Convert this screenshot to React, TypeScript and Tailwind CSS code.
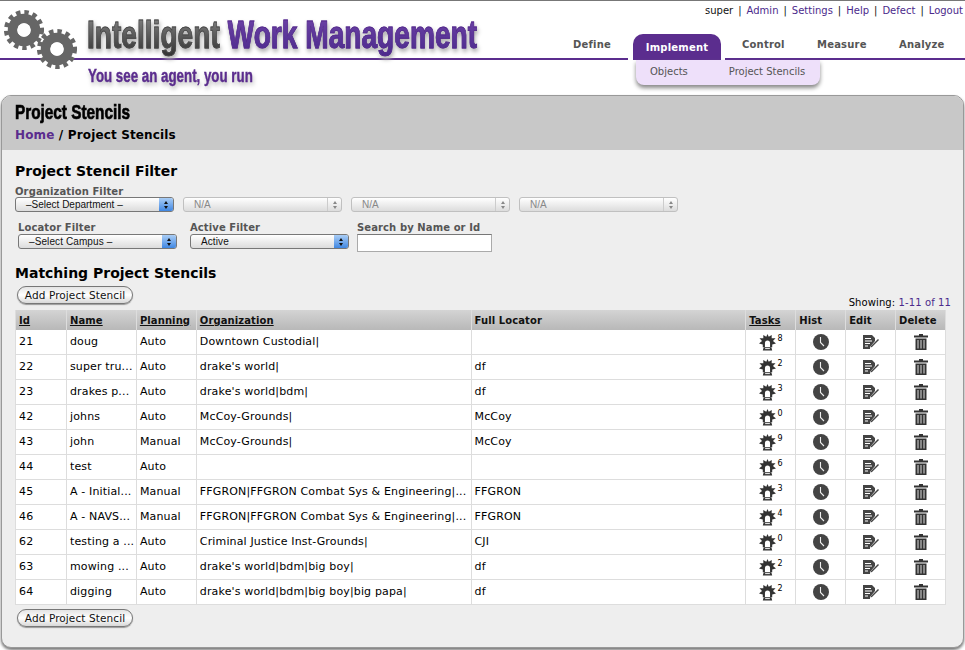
import React from "react";

const rows = [
    ["21", "doug", "Auto", "Downtown Custodial|", "", "8"],
    ["22", "super tru...", "Auto", "drake's world|", "df", "2"],
    ["23", "drakes p...", "Auto", "drake's world|bdm|", "df", "3"],
    ["42", "johns", "Auto", "McCoy-Grounds|", "McCoy", "0"],
    ["43", "john", "Manual", "McCoy-Grounds|", "McCoy", "9"],
    ["44", "test", "Auto", "", "", "6"],
    ["45", "A - Initial...", "Manual", "FFGRON|FFGRON Combat Sys & Engineering|...", "FFGRON", "3"],
    ["46", "A - NAVS...", "Manual", "FFGRON|FFGRON Combat Sys & Engineering|...", "FFGRON", "4"],
    ["62", "testing a ...", "Auto", "Criminal Justice Inst-Grounds|", "CJI", "0"],
    ["63", "mowing ...", "Auto", "drake's world|bdm|big boy|", "df", "2"],
    ["64", "digging", "Auto", "drake's world|bdm|big boy|big papa|", "df", "2"],
];

const Gear = ({ className }: { className: string }) => (
    <svg viewBox="0 0 44 44" className={className}>
        <circle cx="22" cy="22" r="18.5" fill="none" stroke="#666" strokeWidth="5" strokeDasharray="4.6 4.1" />
        <circle cx="22" cy="22" r="12" fill="none" stroke="#666" strokeWidth="10" />
        <circle cx="22" cy="22" r="7" fill="#fff" />
    </svg>
);

const Beacon = () => (
    <svg viewBox="0 0 18 18" className="w-[17px] h-[17px]">
        <polygon
            points="9,0 10.3,3 13.5,1 13.4,4.4 17.5,4.5 14.8,7.5 18,10 14,11 14,14 4,14 4,11 0,10 3.2,7.5 0.5,4.5 4.6,4.4 4.5,1 7.7,3"
            fill="#333"
        />
        <path d="M6.3 14 V9.5 a2.7 2.7 0 0 1 5.4 0 V14 Z" fill="#fff" />
        <path d="M5 14 H13 L14 17.5 H4 Z" fill="#333" />
        <rect x="6.5" y="15" width="5" height="1" fill="#fff" />
    </svg>
);

const Clock = () => (
    <svg viewBox="0 0 16 16" className="w-[16px] h-[16px]">
        <circle cx="8" cy="8" r="8" fill="#444" />
        <path d="M7.5 3 V8.5 L11 12" fill="none" stroke="#eee" strokeWidth="1.1" />
    </svg>
);

const EditNote = () => (
    <svg viewBox="0 0 16 14" className="w-[16px] h-[14px]">
        <path d="M0 0 H9 L12 3 V6 L7 12 V14 H0 Z" fill="#444" />
        <path d="M2 3.5 H8 M2 6 H9 M2 8.5 H7 M2 11 H5" stroke="#fff" strokeWidth="1" />
        <path d="M8 11 L15 4 L16 5 L9 12 L7.5 12.5 Z" fill="#444" />
    </svg>
);

const Trash = () => (
    <svg viewBox="0 0 14 16" className="w-[14px] h-[16px]">
        <path d="M5 0 H9 V1.5 H14 V3.5 H0 V1.5 H5 Z" fill="#333" />
        <path d="M1.5 4.5 H12.5 V16 H1.5 Z" fill="#333" />
        <path d="M4 6 V14.5 M7 6 V14.5 M10 6 V14.5" stroke="#ddd" strokeWidth="1" />
    </svg>
);

const FakeSelect = ({ label, disabled, className }: { label: string; disabled?: boolean; className: string }) => (
    <div
        className={`h-[15px] flex items-center justify-between rounded-[3px] border pl-[10px] font-['Liberation_Sans',sans-serif] text-[10px] leading-none bg-gradient-to-b from-white to-[#dcdcdc] ${
            disabled ? "border-[#c0c0c0] text-[#888]" : "border-[#777] text-[#111]"
        } ${className}`}
    >
        <span>{label}</span>
        {disabled ? (
            <span className="w-[14px] h-full border-l border-[#ccc] flex flex-col items-center justify-center gap-[2px]">
                <span className="w-0 h-0 border-x-[2px] border-x-transparent border-b-[3px] border-b-[#888]" />
                <span className="w-0 h-0 border-x-[2px] border-x-transparent border-t-[3px] border-t-[#888]" />
            </span>
        ) : (
            <span className="w-[14px] h-full rounded-r-[2px] bg-gradient-to-b from-[#a9cdf5] to-[#3f87e2] flex flex-col items-center justify-center gap-[2px]">
                <span className="w-0 h-0 border-x-[2px] border-x-transparent border-b-[3px] border-b-[#111]" />
                <span className="w-0 h-0 border-x-[2px] border-x-transparent border-t-[3px] border-t-[#111]" />
            </span>
        )}
    </div>
);

const AddButton = () => (
    <button className="ml-[2px] w-[116px] h-[18px] rounded-[9px] border border-[#777] bg-gradient-to-b from-[#e4e4e4] via-white to-[#d8d8d8] text-[10.5px] tracking-[0.1px] leading-none text-[#111] shadow-[0_1px_1px_#999]">
        Add Project Stencil
    </button>
);

const Th = ({ children, className, link }: { children: string; className: string; link?: boolean }) => (
    <div className={`h-full flex items-center pl-[3px] border-r border-[#ddd] ${link ? "underline" : ""} ${className}`}>
        {children}
    </div>
);

const Td = ({ children, className }: { children?: React.ReactNode; className: string }) => (
    <div className={`h-full flex items-center pl-[3px] pt-px border-r border-[#ddd] whitespace-nowrap overflow-hidden ${className}`}>
        {children}
    </div>
);

const IconTd = ({ children }: { children: React.ReactNode }) => (
    <div className="w-[50px] h-full flex items-center justify-center border-r border-[#ddd]">{children}</div>
);

export default function App() {
    return (
        <div className="w-[965px] h-[650px] overflow-hidden bg-white border-t border-[#777] font-['DejaVu_Sans',sans-serif] text-[11px] text-black">
            <header className="relative h-[94px] flex">
                <Gear className="absolute z-10 left-[3px] top-[8px] w-[42px] h-[42px]" />
                <Gear className="absolute z-10 left-[36px] top-[27px] w-[42px] h-[42px]" />
                <div className="w-[628px]">
                    <div className="h-[59px] border-b-2 border-[#5b2d8e] pl-[87px] flex justify-between">
                        <div className="w-[400px] pt-[14px] whitespace-nowrap drop-shadow-[1px_3px_2px_#aaa]">
                            <div className="inline-block origin-left scale-x-[0.74] text-[38px] leading-[40px] font-bold font-['Liberation_Sans',sans-serif] [-webkit-text-stroke:0.8px_#4a4a4a]">
                                <span className="bg-gradient-to-b from-[#888] to-[#333] bg-clip-text text-transparent">Intelligent </span>
                                <span className="bg-gradient-to-b from-[#6f43a8] to-[#4b2a8c] bg-clip-text text-transparent [-webkit-text-stroke:0.8px_#552b8c]">Work Management</span>
                            </div>
                        </div>
                        <div className="pt-[37px] pr-[17px] text-[10px] tracking-[0.2px] leading-[14px] font-bold text-[#555]">Define</div>
                    </div>
                    <div className="pl-[88px] pt-[5px] whitespace-nowrap drop-shadow-[1px_3px_2px_#bbb]">
                        <div className="inline-block origin-left scale-x-[0.74] text-[18px] leading-[22px] font-bold font-['Liberation_Sans',sans-serif] text-[#5b2d8e] [-webkit-text-stroke:0.4px_#5b2d8e]">
                            You see an agent, you run
                        </div>
                    </div>
                </div>
                <div className="flex-1 relative">
                    <div className="h-[33px] flex justify-end gap-[5px] pr-[2px] pt-[3px] text-[10px] leading-[14px] text-[#111]">
                        <span>super</span>
                        <span>|</span>
                        <span className="text-[#4b2a8c]">Admin</span>
                        <span>|</span>
                        <span className="text-[#4b2a8c]">Settings</span>
                        <span>|</span>
                        <span className="text-[#4b2a8c]">Help</span>
                        <span>|</span>
                        <span className="text-[#4b2a8c]">Defect</span>
                        <span>|</span>
                        <span className="text-[#4b2a8c]">Logout</span>
                    </div>
                    <nav className="h-[26px] flex font-bold text-[#555] text-[10px] tracking-[0.2px]">
                        <div className="w-[5px]" />
                        <div className="w-[88px] rounded-t-[10px] bg-[#5b2d8e] text-white flex items-center justify-center">
                            Implement
                        </div>
                        <div className="flex-1 border-b-2 border-[#5b2d8e] ml-[4px] flex items-center pl-[17px] pb-[3px]">
                            <span className="w-[75px]">Control</span>
                            <span className="w-[82px]">Measure</span>
                            <span>Analyze</span>
                        </div>
                    </nav>
                    <div className="absolute left-[8px] top-[59px] w-[184px] h-[25px] rounded-b-[8px] bg-[#eee0fa] shadow-[0_3px_4px_#888] flex items-center pl-[14px] pb-[2px] gap-[41px] text-[#555] text-[10px]">
                        <span>Objects</span>
                        <span>Project Stencils</span>
                    </div>
                </div>
            </header>
            <main className="mx-px h-[553px] rounded-[10px] border border-[#999] bg-[#eee] shadow-[0_2px_3px_#777] overflow-hidden">
                <div className="h-[54px] bg-[#c8c8c8] pl-[13px] pt-[5px]">
                    <h1 className="origin-left scale-x-[0.73] w-[200px] whitespace-nowrap text-[21px] leading-[22px] font-bold font-['Liberation_Sans',sans-serif] [-webkit-text-stroke:0.7px_#000]">
                        Project Stencils
                    </h1>
                    <div className="mt-[3px] text-[12px] tracking-[0.15px] leading-[18px] font-bold">
                        <span className="text-[#5b2d8e]">Home</span> / Project Stencils
                    </div>
                </div>
                <div className="pl-[13px] pr-[18px]">
                    <h2 className="pt-[12px] text-[14px] leading-[18px] font-bold">Project Stencil Filter</h2>
                    <div className="mt-[6px] font-bold text-[10px] tracking-[0.1px] text-[#555] leading-[11px]">Organization Filter</div>
                    <div className="flex gap-[9px]">
                        <FakeSelect label="–Select Department –" className="w-[159px]" />
                        <FakeSelect label="N/A" disabled className="w-[159px]" />
                        <FakeSelect label="N/A" disabled className="w-[159px]" />
                        <FakeSelect label="N/A" disabled className="w-[159px]" />
                    </div>
                    <div className="flex mt-[10px] pl-[3px] h-[30px] text-[10px] tracking-[0.1px]">
                        <div className="w-[172px]">
                            <div className="font-bold text-[#555] leading-[12px]">Locator Filter</div>
                            <FakeSelect label="–Select Campus –" className="w-[159px]" />
                        </div>
                        <div className="w-[167px]">
                            <div className="font-bold text-[#555] leading-[12px]">Active Filter</div>
                            <FakeSelect label="Active" className="w-[159px]" />
                        </div>
                        <div className="-mt-px">
                            <div className="font-bold text-[#555] leading-[13px]">Search by Name or Id</div>
                            <div className="w-[135px] h-[18px] bg-white border border-[#aaa] border-t-[#777]" />
                        </div>
                    </div>
                    <h2 className="mt-[12px] text-[14px] leading-[18px] font-bold">Matching Project Stencils</h2>
                    <div className="mt-[4px] flex justify-between items-start h-[19px]">
                        <AddButton />
                        <div className="mt-[10px] text-[10px] tracking-[0.1px] leading-[13px] -mr-[6px]">
                            Showing: <span className="text-[#4b2a8c]">1-11 of 11</span>
                        </div>
                    </div>
                    <div className="mt-[5px] w-[931px] border-l border-[#ddd] bg-white">
                        <div className="h-[20px] flex font-bold text-[10px] tracking-[0.1px] text-[#111] bg-gradient-to-b from-[#d4d4d4] to-[#b8b8b8]">
                            <Th link className="w-[51px]">Id</Th>
                            <Th link className="w-[70px]">Name</Th>
                            <Th link className="w-[60px]">Planning</Th>
                            <Th link className="w-[275px]">Organization</Th>
                            <Th className="w-[275px]">Full Locator</Th>
                            <Th link className="w-[50px]">Tasks</Th>
                            <Th className="w-[50px]">Hist</Th>
                            <Th className="w-[50px]">Edit</Th>
                            <Th className="w-[50px]">Delete</Th>
                        </div>
                        {rows.map((row) => (
                            <div key={row[0]} className="h-[25px] flex border-b border-[#ddd] tracking-[0.15px]">
                                <Td className="w-[51px]">{row[0]}</Td>
                                <Td className="w-[70px]">{row[1]}</Td>
                                <Td className="w-[60px]">{row[2]}</Td>
                                <Td className="w-[275px]">{row[3]}</Td>
                                <Td className="w-[275px]">{row[4]}</Td>
                                <IconTd>
                                    <Beacon />
                                    <span className="text-[8px] leading-none -mt-[7px] ml-[2px]">{row[5]}</span>
                                </IconTd>
                                <IconTd><Clock /></IconTd>
                                <IconTd><EditNote /></IconTd>
                                <IconTd><Trash /></IconTd>
                            </div>
                        ))}
                    </div>
                    <div className="mt-[4px]">
                        <AddButton />
                    </div>
                </div>
            </main>
        </div>
    );
}
